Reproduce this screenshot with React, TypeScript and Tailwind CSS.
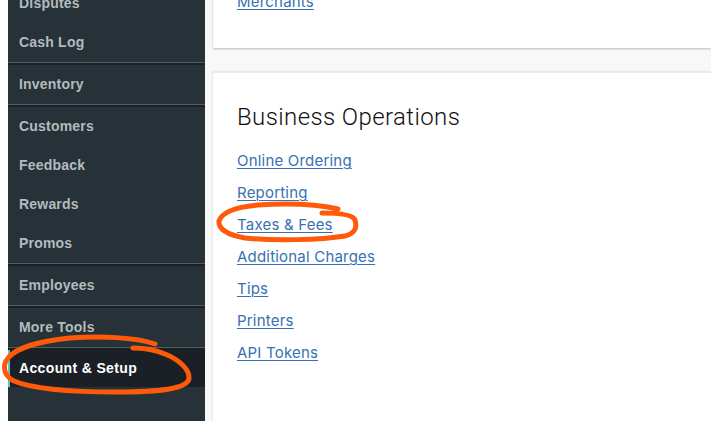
import React from "react";

const groups: string[][] = [
  ["Disputes", "Cash Log"],
  ["Inventory"],
  ["Customers", "Feedback", "Rewards", "Promos"],
  ["Employees"],
  ["More Tools"],
];

const links = [
  "Online Ordering",
  "Reporting",
  "Taxes & Fees",
  "Additional Charges",
  "Tips",
  "Printers",
  "API Tokens",
];

function Divider() {
  return (
    <div className="flex flex-col">
      <div className="h-px bg-[#535c61]" />
      <div className="h-[2px] bg-[#1b2226]" />
    </div>
  );
}

export default function App() {
  return (
    <div className="relative flex h-[421px] w-[711px] overflow-hidden bg-white">
      <div className="w-[8px] shrink-0 bg-white" />
      <nav
        className="flex w-[197px] shrink-0 flex-col bg-[#263238]"
        style={{ fontFamily: '"Liberation Sans", Arial, sans-serif' }}
      >
        <div className="-mt-[16px] flex flex-col">
          {groups.map((g, gi) => (
            <React.Fragment key={gi}>
              {gi > 0 && <Divider />}
              {g.map((item) => (
                <div
                  key={item}
                  className="flex h-[39px] items-center pl-[11px] text-[14px] font-bold tracking-[0.2px] text-[#b3bbbf]"
                >
                  {item}
                </div>
              ))}
            </React.Fragment>
          ))}
          <Divider />
          <div className="flex h-[37px] items-center bg-[#1a2026]">
            <div className="h-full w-[2px] bg-[#5cc3d3]" />
            <span className="pl-[9px] text-[14px] font-bold tracking-[0.35px] text-white">
              Account &amp; Setup
            </span>
          </div>
        </div>
      </nav>
      <main className="flex min-w-0 flex-1 flex-col gap-[24px] bg-[#f8f8f8] pl-[8px]">
        <section className="-mt-[10px] h-[58px] bg-white pl-[24px] shadow-[0_1px_2px_rgba(0,0,0,0.25)]">
          <a
            className="block text-[15px] leading-[24px] tracking-[0.2px] text-[#3770b3] underline decoration-1 underline-offset-2"
            style={{ fontFamily: 'Inter, "Liberation Sans", sans-serif' }}
          >
            Merchants
          </a>
        </section>
        <section className="flex-1 border-t border-[#ececec] bg-white pl-[24px] pt-[28px] shadow-[0_0_2px_rgba(0,0,0,0.2)]">
          <h2
            className="text-[24px] font-light leading-[32px] tracking-[0.4px] text-[#111]"
            style={{ fontFamily: 'Roboto, "Liberation Sans", sans-serif' }}
          >
            Business Operations
          </h2>
          <ul
            className="mt-[15px] flex flex-col"
            style={{ fontFamily: 'Inter, "Liberation Sans", sans-serif' }}
          >
            {links.map((l) => (
              <li key={l} className="h-[32px]">
                <a className="text-[15px] leading-[24px] tracking-[0.2px] text-[#3770b3] underline decoration-1 underline-offset-2">
                  {l}
                </a>
              </li>
            ))}
          </ul>
        </section>
      </main>
      <svg
        className="pointer-events-none absolute inset-0"
        width="711"
        height="421"
        viewBox="0 0 711 421"
        fill="none"
        stroke="#ff5a0a"
        strokeWidth="5"
        strokeLinecap="round"
        strokeLinejoin="round"
      >
        <path d="M133 348 C145 348 158 351 165 354 C180 360 190 370 189 379 C186 389 160 392 117 392 C75 392 35 390 14 381 C2 375 3 364 8 358 C16 348 40 341 70 338 C100 336 135 337 155 344" />
        <path d="M338 209 C320 205 290 203 258 205 C235 207 222 212 219 221 C218 229 228 235 245 238 C275 241 320 240 345 236 C356 233 357 227 355 220 C353 215 340 213 322 213" />
      </svg>
    </div>
  );
}
